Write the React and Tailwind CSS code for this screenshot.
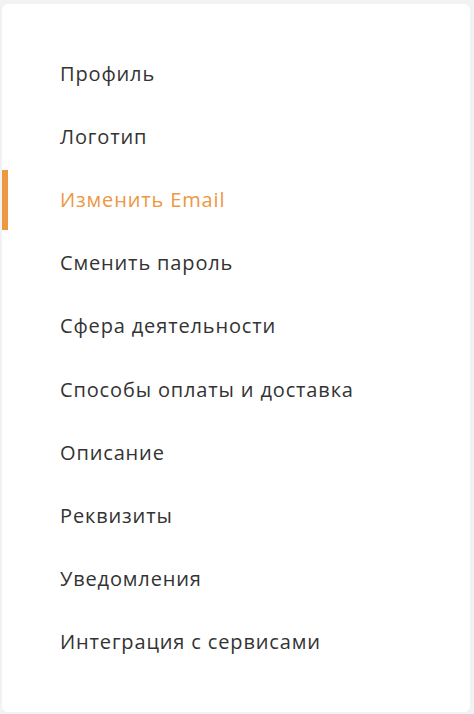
import React from 'react';

const items = [
    'Профиль',
    'Логотип',
    'Изменить Email',
    'Сменить пароль',
    'Сфера деятельности',
    'Способы оплаты и доставка',
    'Описание',
    'Реквизиты',
    'Уведомления',
    'Интеграция с сервисами',
];

const App = () => {
    const active = 2;

    return (
        <div className="min-h-[714px] bg-[#f1f2f4] pt-[4px] pl-[2px] pr-[4px] pb-[2px] font-['Open_Sans',sans-serif]">
            <nav className="bg-white rounded-[6px] h-[708px] pt-[38px]">
                {items.map((label, i) => (
                    <div key={label} className="relative h-[63.2px] flex items-center pl-[58px]">
                        {i === active && (
                            <span className="absolute left-0 top-[2px] bottom-[2px] w-[6px] bg-[#ee9744]" />
                        )}
                        <span className={`text-[20px] leading-none tracking-[0.85px] ${i === active ? 'text-[#ee9744]' : 'text-[#333333]'}`}>
                            {label}
                        </span>
                    </div>
                ))}
            </nav>
        </div>
    );
};

export default App;
